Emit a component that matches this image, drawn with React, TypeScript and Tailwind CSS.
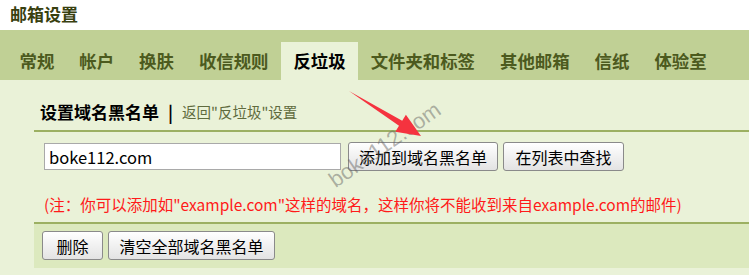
import React from "react";

const tabs = ["常规", "帐户", "换肤", "收信规则", "反垃圾", "文件夹和标签", "其他邮箱", "信纸", "体验室"];

function Btn({ children, className = "" }: { children: React.ReactNode; className?: string }) {
  return (
    <button
      className={
        "h-[29px] rounded-[3px] border border-[#8a8a8a] bg-gradient-to-b from-white to-[#e3e3e3] text-[16px] text-black leading-none " +
        className
      }
    >
      {children}
    </button>
  );
}

export default function App() {
  return (
    <div
      className="relative w-[749px] h-[275px] overflow-hidden bg-white"
      style={{ fontFamily: '"Noto Sans CJK SC", "Liberation Sans", sans-serif' }}
    >
      {/* page title */}
      <div className="h-[30px] pl-[10px] pt-[2px] text-[17px] font-bold leading-[24px] text-[#38400f]">
        邮箱设置
      </div>

      {/* tabs */}
      <div className="h-[50px] bg-[#c0d095] flex items-end pl-[7px]">
        {tabs.map((t) => (
          <div
            key={t}
            className={
              "h-[38px] px-[12.5px] flex items-center text-[17.4px] font-bold " +
              (t === "反垃圾" ? "bg-[#eaf2d8] text-black" : "text-[#4c5a1e]")
            }
          >
            {t}
          </div>
        ))}
      </div>

      {/* content */}
      <div className="bg-[#eaf2d8] pl-[34px] pb-[7px]">
        <div className="h-[52px] border-b-2 border-[#9cb062] pl-[6px] pt-[21px] flex items-start gap-[9px]">
          <span className="text-[17px] font-bold leading-[22px] text-black">设置域名黑名单</span>
          <span className="text-[17px] font-bold leading-[22px] text-black">|</span>
          <span className="text-[14.5px] leading-[22px] text-[#5f6b3e]">返回"反垃圾"设置</span>
        </div>

        <div className="mt-[10px] pl-[10px] flex items-center">
          <input
            defaultValue="boke112.com"
            className="w-[297px] h-[27px] bg-white border border-[#a9a9a9] px-[4px] text-[16.5px] text-black outline-none"
          />
          <Btn className="ml-[7px] w-[150px]">添加到域名黑名单</Btn>
          <Btn className="ml-[5px] w-[121px]">在列表中查找</Btn>
        </div>

        <div className="mt-[23px] pl-[10px] h-[20px] text-[15.5px] leading-[20px] text-[#ff1a1a] whitespace-nowrap">
          (注：你可以添加如"example.com"这样的域名，这样你将不能收到来自example.com的邮件)
        </div>

        <div className="mt-[8px] border-t-2 border-[#9cb062] bg-[#dce9be] h-[46px] pl-[8px] pt-[7px] flex items-start gap-[5px]">
          <Btn className="w-[61px]">删除</Btn>
          <Btn className="w-[167px]">清空全部域名黑名单</Btn>
        </div>
      </div>

      {/* watermark */}
      <div
        className="absolute left-[310px] top-[131px] w-[150px] text-center text-[22px] leading-[28px] text-[rgba(90,90,90,0.45)] -rotate-[35deg] pointer-events-none"
        style={{ fontFamily: '"Liberation Sans", sans-serif' }}
      >
        boke112.com
      </div>

      {/* arrow */}
      <svg className="absolute left-0 top-0 pointer-events-none" width="749" height="275">
        <polygon
          points="349,91 402.2,120.8 405.9,114.8 421,136 395.3,131.8 399,125.8"
          fill="#f5333f"
        />
      </svg>
    </div>
  );
}
